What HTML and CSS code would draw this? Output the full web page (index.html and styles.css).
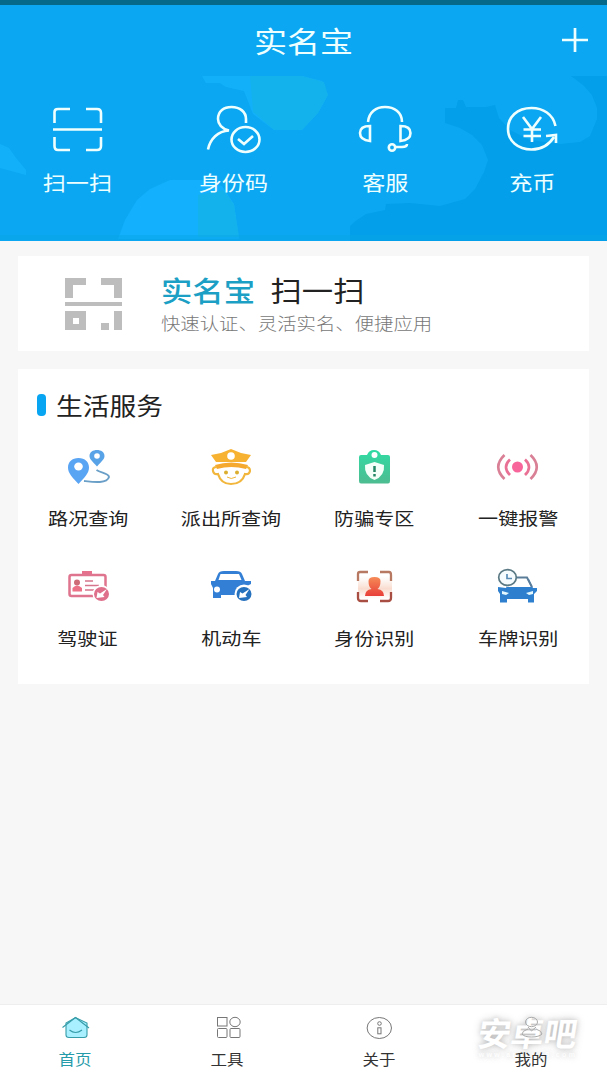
FILE: index.html
```html
<!DOCTYPE html>
<html lang="zh-CN">
<head>
<meta charset="utf-8">
<title>实名宝</title>
<link rel="stylesheet" href="styles.css">
</head>
<body>
<div class="app">
  <header class="hero">
    <svg class="hero-bg" viewBox="0 0 607 241" preserveAspectRatio="none">
      <rect width="607" height="241" fill="#0ba7f2"/>
      <path d="M445 108H456L458 100H463L466 107H486L495 105L499 118L510 130L530 140L560 144L580 142L590 136L597 119L597 108L592 95L583 85L571 76H607V241H350V226L357 220L366 214L385 210L386 204L410 203L440 206L465 199L475 189L484 172L488 160L482 145L472 135L460 128L445 123Z" fill="#039fea"/>
      <path d="M202 76H302L322 81L328 95L318 113L302 130H274L253 114L244 91L226 87L220 83H206Z" fill="#13b0fa"/>
      <path d="M250 76H302L324 82L328 95L318 113L302 130H274L253 112Z" fill="#14b2ec"/>
      <path d="M118 239L125 220L137 200L150 189L170 180H202L222 186L234 204L239 239Z" fill="#13b0fd"/>
      <path d="M198 195L223 190L234 204L239 237H198Z" fill="#14b2ec"/>
      <path d="M0 144L9 148L16 158L26 170V175L0 168Z" fill="#13b0fa"/>
      <rect y="235" width="607" height="5" fill="#08a5e5" opacity=".5"/>
    </svg>
    <div class="status"></div>
    <div class="titlebar">
      <h1 class="wide">实名宝</h1>
      <svg class="plus" width="28" height="26" viewBox="0 0 28 26"><path d="M1 13H27M14 1V25" stroke="#eff" stroke-width="2.7" fill="none"/></svg>
    </div>
    <nav class="quick">
      <a class="quick-item">
        <svg width="60" height="56" viewBox="47 101 60 56" class="line">
          <path d="M54.5 123V112Q54.5 109 58 109H70M86 109H97Q101 109 101 113V123M54.5 137V146Q54.5 150 58 150H70M86 150H97Q101 150 101 146V137M53 129.5H102"/>
        </svg>
        <span class="wide">扫一扫</span>
      </a>
      <a class="quick-item">
        <svg width="60" height="56" viewBox="203 101 60 56" class="line">
          <path d="M208 149.500C210 139 218 131 229 130.500C222 129 218 124 218 119C218 111 224 107 231.500 107C240 107 246 112 246 119V123"/>
          <ellipse cx="245.500" cy="139.500" rx="14" ry="12.500"/><path d="M238 139L244 144L253 136"/>
        </svg>
        <span class="wide">身份码</span>
      </a>
      <a class="quick-item">
        <svg width="60" height="56" viewBox="355 101 60 56" class="line">
          <path d="M368 122C369 112 376 107 385 107C394 107 402 112 402 122M370 126V141Q360 140 360 133Q360 126 370 126ZM400.500 126V141Q410.500 140 410.500 133Q410.500 126 400.500 126ZM396 147H402Q407 147 407 144"/>
          <circle cx="392" cy="147.500" r="3.200"/>
        </svg>
        <span class="wide">客服</span>
      </a>
      <a class="quick-item">
        <svg width="60" height="56" viewBox="502 101 60 56" class="line">
          <path d="M555.500 126C553 114 543 108 531.500 108C517 108 508 117 508 129C508 141 518 149.500 531.500 149.500C542 149.500 549 145 554 137M546 136L556 135V143M523 117L532 129L541 117M532 129V142M523.500 129.500H541M523.500 136H541"/>
        </svg>
        <span class="wide">充币</span>
      </a>
    </nav>
  </header>

  <main class="content">
    <section class="card scan">
      <svg class="scan-icon" width="58" height="54" viewBox="0 0 58 54" fill="#bdbdbd">
        <path d="M0 0H21V7H8V20H0ZM36 0H57V20H49V7H36ZM0 24H57V28H0ZM0 33H21V52H0ZM8 40V46H14V40ZM49 33H57V52H49ZM36 45H44V52H36Z" fill-rule="evenodd"/>
      </svg>
      <div class="scan-text">
        <div class="scan-title"><span class="wide"><b>实名宝</b><i>扫一扫</i></span></div>
        <div class="scan-sub"><span class="wide">快速认证、灵活实名、便捷应用</span></div>
      </div>
    </section>

    <section class="card services">
      <h2><i class="bar"></i><span class="wide">生活服务</span></h2>
      <div class="grid">
        <a class="service">
          <svg width="48" height="44" viewBox="64 446 48 44">
            <path d="M78.500 484C72 477 68 473 68 467.500C68 462 72 458 78.500 458C85 458 89 462 89 467.500C89 473 85 477 78.500 484Z" fill="#5aa4f4"/><ellipse cx="78.500" cy="466.500" rx="4.300" ry="4" fill="#fff"/>
            <path d="M97 466.500C92 461 89.500 459 89.500 456C89.500 452 93 450 97 450C101 450 104.500 452 104.500 456C104.500 459 102 461 97 466.500Z" fill="#58a3e8"/><circle cx="97" cy="456" r="2.800" fill="#fff"/>
            <path d="M96.500 470C101 473 109 473 109 477C107 484 93 482 84 481" fill="none" stroke="#6a9fc8" stroke-width="1.900"/>
          </svg>
          <span class="wide">路况查询</span>
        </a>
        <a class="service">
          <svg width="48" height="44" viewBox="208 446 48 44">
            <path d="M212 455L222 453L232 449L242 453L252 455L247 462H217Z" fill="#f7b232"/><circle cx="232" cy="456" r="3.800" fill="#fff"/>
            <path d="M216 465Q232 460 249 465L247 469Q232 465 218 469Z" fill="#f6a92f"/>
            <path d="M218 467Q213 467 214 471Q215 475 219 474Q222 484 232 484Q243 484 246 474Q250 475 251 471Q251 467 247 467" fill="none" stroke="#f1b63b" stroke-width="2.200"/>
            <circle cx="227" cy="472.500" r="2" fill="#dcae30"/><circle cx="238" cy="472.500" r="2" fill="#dcae30"/><path d="M228 477Q232 480 237 477" stroke="#f1b63b" fill="none"/>
          </svg>
          <span class="wide">派出所查询</span>
        </a>
        <a class="service">
          <svg width="48" height="44" viewBox="351 446 48 44">
            <defs><linearGradient id="mint" x2="0" y2="1"><stop stop-color="#31dba4"/><stop offset="1" stop-color="#4dbc91"/></linearGradient></defs>
            <path d="M362 455H368Q370 450 375 450Q380 450 382 455H389Q391 455 391 457V481Q391 483.500 389 483.500H362Q360 483.500 360 481V457Q360 455 362 455Z" fill="url(#mint)"/><circle cx="375.500" cy="455" r="3" fill="#fff"/>
            <path d="M366 465L375.500 462L385 465Q386 476 375.500 480Q365 476 366 465Z" fill="#f5fff9"/><path d="M375.500 466V472M375.500 474V476.500" stroke="#238665" stroke-width="2.500"/>
          </svg>
          <span class="wide">防骗专区</span>
        </a>
        <a class="service">
          <svg width="48" height="44" viewBox="495 446 48 44" fill="none" stroke-width="2.700">
            <circle cx="518.500" cy="467" r="5.500" fill="#f8659a"/>
            <path d="M511 459.500Q503 467 511 475M526 459.500Q534 467 526 475" stroke="#e97196"/><path d="M505.500 455Q493 467 505.500 479M531.500 455Q544 467 531.500 479" stroke="#d98096"/>
          </svg>
          <span class="wide">一键报警</span>
        </a>
        <a class="service">
          <svg width="48" height="44" viewBox="64 566 48 44">
            <path d="M82 574V571H92V574" fill="#e5718c"/><rect x="69.500" y="575" width="36" height="21" rx="2" fill="#fff" stroke="#df748e" stroke-width="2.500"/>
            <circle cx="77" cy="582.500" r="3" fill="#ce6c78"/><path d="M72.500 591.500V588Q77 583 82 588V591.500Z" fill="#ec7288"/><path d="M85 581H93M85 585.500H99M85 590H94" stroke="#d5768c" stroke-width="1.700"/>
            <circle cx="101.500" cy="594" r="9" fill="#fff"/><ellipse cx="101.500" cy="594" rx="7.500" ry="7" fill="#df708b"/><path d="M96.500 598L97.500 592L100 593.500L107 589L103 595L104.500 597Z" fill="#fff"/>
          </svg>
          <span class="wide">驾驶证</span>
        </a>
        <a class="service">
          <svg width="48" height="44" viewBox="208 566 48 44">
            <path d="M216 581L219 574Q220 571 225 571H237Q242 571 243 574L246 581H252V584L248 586V595H222V598H214V588L212 584V581Z" fill="#337fd5"/><path d="M219.500 580L221.500 574H240L242.500 580Z" fill="#fff"/><circle cx="218" cy="589.500" r="3" fill="#fff"/>
            <circle cx="245" cy="594" r="9.500" fill="#fff"/><ellipse cx="245" cy="594" rx="7.500" ry="7" fill="#2671be"/><path d="M240 598L241 592L243.500 593.500L250.500 589L246.500 595L248 597Z" fill="#fff"/>
          </svg>
          <span class="wide">机动车</span>
        </a>
        <a class="service">
          <svg width="48" height="44" viewBox="351 566 48 44" fill="none">
            <defs><linearGradient id="glow" x2="0" y2="1"><stop stop-color="#f9e7de" stop-opacity="0"/><stop offset=".55" stop-color="#f9dccf"/><stop offset="1" stop-color="#fff"/></linearGradient><linearGradient id="person" x2="0" y2="1"><stop stop-color="#f68b58"/><stop offset="1" stop-color="#e83f38"/></linearGradient></defs>
            <rect x="359" y="576" width="34" height="23" fill="url(#glow)"/>
            <path d="M359 581V574Q359 572 361 572H369M381 572H390Q392 572 392 575V581" stroke="#b87962" stroke-width="2.300"/><path d="M359 592V598Q359 601 362 601H369M381 601H389Q392 601 392 598V592" stroke="#a94e42" stroke-width="2.300"/>
            <path d="M369.500 581Q369.500 577 375.500 577Q381.500 577 381.500 581Q381.500 587 378.500 589Q385 590 385 596H366Q366 590 372.500 589Q369.500 587 369.500 581Z" fill="url(#person)"/>
          </svg>
          <span class="wide">身份识别</span>
        </a>
        <a class="service">
          <svg width="48" height="44" viewBox="495 566 48 44">
            <path d="M507 588L511 579H530L534 588H538V591L535 594V602.500H529V599H508V602.500H501V594L499 591V587Z" fill="#2e80cf"/><path d="M510 578.500H528L532 587H508Z" fill="#fff"/><path d="M517 577.500H528L533 587" stroke="#5b7d99" stroke-width="2" fill="none"/>
            <path d="M503 591L510 593L507 595L503 594ZM534 591L527 593L530 595L534 594Z" fill="#e4f8ff"/>
            <ellipse cx="508.500" cy="577.500" rx="8.800" ry="7.800" fill="#f6fcfe" stroke="#5a7984" stroke-width="1.700"/><path d="M508 574V578.500H513" stroke="#5b8db7" stroke-width="1.700" fill="none"/>
          </svg>
          <span class="wide">车牌识别</span>
        </a>
      </div>
    </section>
  </main>

  <footer class="tabs">
    <div class="stamp"><strong>安卓吧</strong><small>www.anzhuo8.com</small></div>
    <a class="tab active">
      <svg width="32" height="26" viewBox="60 1015 32 26" fill="none" stroke="#369ca8" stroke-width="1.100">
        <path d="M66 1023V1035Q66 1037.500 69 1037.500H84Q87 1037.500 87 1035V1023L75.500 1017.500Z" fill="#a8efff"/><path d="M62.500 1027.500L75.500 1017.500L89 1028M69.500 1030Q75.500 1035 82 1030"/>
      </svg>
      <span class="wide">首页</span>
    </a>
    <a class="tab">
      <svg width="32" height="26" viewBox="211 1015 32 26" fill="none" stroke="#777">
        <rect x="216.500" y="1017.500" width="9.500" height="8.500"/><ellipse cx="234" cy="1022" rx="5.200" ry="4.700"/><rect x="216.500" y="1028.500" width="9.500" height="9" rx="1"/><rect x="229" y="1028.500" width="10" height="9" rx="1"/>
      </svg>
      <span class="wide">工具</span>
    </a>
    <a class="tab">
      <svg width="32" height="26" viewBox="363 1015 32 26" fill="none" stroke="#777">
        <ellipse cx="379.300" cy="1028" rx="12.200" ry="10.500"/><circle cx="379.500" cy="1023.500" r="1.800"/><rect x="377.800" y="1027.800" width="3.200" height="6"/>
      </svg>
      <span class="wide">关于</span>
    </a>
    <a class="tab">
      <svg width="32" height="26" viewBox="514 1015 32 26" fill="none" stroke="#aaa">
        <ellipse cx="530.500" cy="1022" rx="6" ry="4.700"/><path d="M527 1027L530.500 1031L535 1027M527 1029Q521 1031 521 1034Q523 1037 530.500 1037Q538 1037 541 1034Q541 1031 535 1029"/>
      </svg>
      <span class="wide">我的</span>
    </a>
  </footer>
</div>
</body>
</html>
```
FILE: styles.css
```css
* { box-sizing: border-box; }
body {
  margin: 0;
  font-family: "Noto Sans CJK SC", "Noto Sans", sans-serif;
  font-weight: 400;
  color: #222;
}
svg { display: block; flex: none; }
.app {
  display: flex;
  flex-direction: column;
  width: 607px;
  height: 1080px;
  overflow: hidden;
  background: #f7f7f7;
}
/* glyphs are drawn slightly wider than tall */
.wide {
  display: inline-block;
  white-space: nowrap;
  transform: scaleX(1.14);
}

.hero { position: relative; height: 241px; flex: none; color: #eff; }
.hero-bg { position: absolute; inset: 0; width: 100%; height: 100%; }
.status { position: relative; height: 5px; background: #07698a; }
.titlebar {
  position: relative;
  display: grid;
  grid-template-columns: 60px 1fr 60px;
  align-items: center;
  height: 69px;
}
.titlebar h1 {
  grid-column: 2;
  margin: 0;
  font-size: 29px;
  line-height: 40px;
  font-weight: 400;
  text-align: center;
}
.plus { justify-self: center; margin-left: -5px; }
.quick {
  position: relative;
  display: grid;
  grid-template-columns: 154px 158px 146px 148px;
  padding-top: 27px;
}
.quick-item { display: flex; flex-direction: column; align-items: center; }
.quick-item .wide { margin-top: 10px; font-size: 20.3px; line-height: 30px; }
.line { fill: none; stroke: #effffd; stroke-width: 2.6; }

.content { flex: 1; padding: 15px 18px 0; }
.card { background: #fff; }
.scan { display: flex; height: 95px; padding: 22px 0 0 47px; }
.scan-text { margin: -2px 0 0 38px; }
.scan-text .wide { transform-origin: left; }
.scan-title { height: 27px; line-height: 27px; font-size: 28.5px; }
.scan-title .wide { transform: scaleX(1.1); }
.scan-title b { margin-right: 14px; font-weight: 500; color: #1b9fc4; }
.scan-title i { font-style: normal; }
.scan-sub { margin-top: 8px; height: 24px; line-height: 24px; font-size: 17.5px; font-weight: 300; color: #777; }
.scan-sub .wide { transform: scaleX(1.107); }

.services { height: 315px; margin-top: 18px; padding-top: 20px; }
.services h2 {
  display: flex;
  align-items: center;
  height: 32px;
  margin: 0;
  padding-left: 19px;
  font-size: 23.5px;
  line-height: 32px;
  font-weight: 400;
}
.services h2 .wide { margin-left: 10px; transform-origin: left; }
.bar { width: 9px; height: 22px; border-radius: 4px; background: #08a5f2; }
.grid {
  display: grid;
  grid-template-columns: repeat(4, 143.4px);
  grid-auto-rows: 120px;
  margin: 25px 0 0 -2px;
}
.service { display: flex; flex-direction: column; align-items: center; }
.service .wide { margin-top: 15px; font-size: 17.6px; line-height: 26px; }

.tabs {
  position: relative;
  display: grid;
  grid-template-columns: repeat(4, 1fr);
  height: 76px;
  padding-top: 10px;
  border-top: 1px solid #eee;
  background: #fff;
}
.tab { position: relative; display: flex; flex-direction: column; align-items: center; color: #333; }
.tab .wide { margin-top: 8px; margin-right: 1px; font-size: 15px; line-height: 20px; transform: scaleX(1.1); }
.tab.active { color: #269ba9; }

.stamp {
  position: absolute;
  right: 26px;
  top: 9px;
  width: 106px;
  color: #fff;
  text-align: center;
  white-space: nowrap;
  text-shadow: 0 0 5px rgba(0, 0, 0, .16), 0 0 10px rgba(0, 0, 0, .2);
}
.stamp strong { display: block; font-size: 33px; line-height: 37px; font-weight: 700; transform: skewX(-9deg); }
.stamp small { display: block; font: 700 7px/8px "Liberation Sans", sans-serif; letter-spacing: 2.4px; }
```
